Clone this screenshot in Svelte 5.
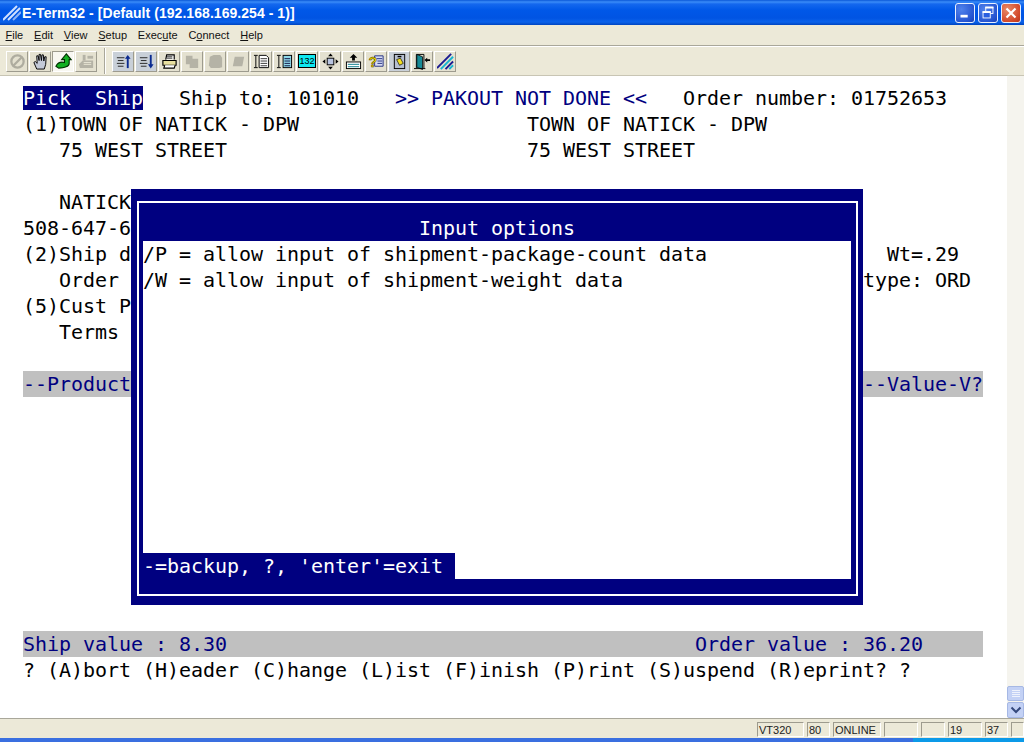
<script>
  const leftRows = [
    [{ t: 'Pick  Ship', c: 'rev' }, { t: '   Ship to: 101010   ' }, { t: '>> PAKOUT NOT DONE <<', c: 'navy' }, { t: '   Order number: 01752653' }],
    [{ t: '(1)TOWN OF NATICK - DPW                   TOWN OF NATICK - DPW' }],
    [{ t: '   75 WEST STREET                         75 WEST STREET' }],
    [{ t: ' ' }],
    [{ t: '   NATICK' }],
    [{ t: '508-647-6' }],
    [{ t: '(2)Ship d' }, { t: 'Wt=.29', gap: 63 }],
    [{ t: '   Order' }, { t: 'type: ORD', gap: 62 }],
    [{ t: '(5)Cust P' }],
    [{ t: '   Terms' }],
    [{ t: ' ' }]
  ];
  const blank = 9;
  const menus = [
    ['', 'F', 'ile'],
    ['', 'E', 'dit'],
    ['', 'V', 'iew'],
    ['', 'S', 'etup'],
    ['Exec', 'u', 'te'],
    ['C', 'o', 'nnect'],
    ['', 'H', 'elp']
  ];
  const panels = [
    { label: 'VT320', w: 47 },
    { label: '80', w: 23 },
    { label: 'ONLINE', w: 48 },
    { label: '', w: 34 },
    { label: '', w: 24 },
    { label: '19', w: 34 },
    { label: '37', w: 23 },
    { label: '', w: 13 }
  ];
</script>

<div class="window">
  <header class="titlebar">
    <svg class="logo" viewBox="0 0 18 18" width="18" height="18">
      <path d="M0 16 L14 2 M5 16 L17 4" stroke="#cfe0ff" stroke-width="2" fill="none" />
      <path d="M10 16 L18 8" stroke="#8fb4f4" stroke-width="2" fill="none" />
    </svg>
    <span class="title">E-Term32 - [Default (192.168.169.254 - 1)]</span>
    <div class="winbtns">
      <button class="wb" aria-label="Minimize">
        <svg viewBox="0 0 20 20"><rect x="5" y="12" width="8" height="3" fill="#fff" /></svg>
      </button>
      <button class="wb" aria-label="Restore">
        <svg viewBox="0 0 20 20" fill="none" stroke="#fff">
          <rect x="7.5" y="3.5" width="8" height="7" stroke-width="1" />
          <path d="M7 4 h9" stroke-width="2" />
          <rect x="4.5" y="8.5" width="8" height="7" fill="#2a5fe0" stroke-width="1" />
          <path d="M4 9 h9" stroke-width="2" />
        </svg>
      </button>
      <button class="wb close" aria-label="Close">
        <svg viewBox="0 0 20 20"><path d="M5 5 L15 15 M15 5 L5 15" stroke="#fff" stroke-width="2.4" /></svg>
      </button>
    </div>
  </header>

  <nav class="menubar">
    {#each menus as m}
      <span class="menu">{m[0]}<u>{m[1]}</u>{m[2]}</span>
    {/each}
  </nav>

  <div class="toolbar">
    <div class="group">
      <button class="tb" aria-label="Stop">
        <svg viewBox="0 0 18 18" fill="none" stroke="#aeac9f" stroke-width="2.4"><circle cx="9" cy="9" r="6.5" /><path d="M4.5 13.5 L13.5 4.5" /></svg>
      </button>
      <button class="tb" aria-label="Hold">
        <svg viewBox="0 0 18 18"><path d="M5 17 L2 10 L3.5 9 L5.5 11 L5 3 H6.5 L7.5 8 L7.5 1.5 H9 L10 8 L10.5 2 H12 L12.5 8.5 L13.5 4 H15 L14.5 12 L13 17 Z" fill="#c4cad8" stroke="#000" stroke-width="1" /></svg>
      </button>
      <button class="tb pressed" aria-label="Connect">
        <svg viewBox="0 0 18 18"><path d="M12 1 L17 7 H15 V11 C15 14 10 16 4 16 L1 14 C3 10 6 9 10 10 V7 H7 Z" fill="#12b022" stroke="#003000" stroke-width="1.2" /></svg>
      </button>
      <button class="tb" aria-label="Fax">
        <svg viewBox="0 0 18 18" fill="#b5b3a6"><path d="M1 12 L5 8 H16 V16 H2 Z" /><rect x="5" y="2" width="3" height="6" /><rect x="10" y="3" width="6" height="3" /><path d="M6 10 h8 M6 12 h8" stroke="#ece9d8" /></svg>
      </button>
    </div>
    <div class="sep"></div>
    <div class="group">
      <button class="tb tint" aria-label="Page up">
        <svg viewBox="0 0 18 18"><path d="M2 5 h8 M3 8 h6 M2 11 h8 M3 14 h6" stroke="#222" /><path d="M13.5 16 V4" stroke="#0a2a90" stroke-width="2" /><path d="M10.5 6 L13.5 2 L16.5 6 Z" fill="#0a2a90" /></svg>
      </button>
      <button class="tb tint" aria-label="Page down">
        <svg viewBox="0 0 18 18"><path d="M2 5 h8 M3 8 h6 M2 11 h8 M3 14 h6" stroke="#222" /><path d="M13.5 2 V14" stroke="#0a2a90" stroke-width="2" /><path d="M10.5 12 L13.5 16.5 L16.5 12 Z" fill="#0a2a90" /></svg>
      </button>
      <button class="tb" aria-label="Print">
        <svg viewBox="0 0 18 18" fill="#fff" stroke="#000" stroke-width="1.2"><path d="M5 7 L6 2 H14 L14 7" /><path d="M2 8 H16 V13 H2 Z" fill="#e8e0a0" /><path d="M4 13 L3 16 H14 L15 13" /><path d="M6 4 h6 M6 5.5 h6" stroke-width="0.8" /></svg>
      </button>
      <button class="tb" aria-label="Copy">
        <svg viewBox="0 0 18 18" fill="#b5b3a6"><path d="M2 3 H9 V6 H15 V16 H6 V12 H2 Z" /></svg>
      </button>
      <button class="tb" aria-label="Paste">
        <svg viewBox="0 0 18 18" fill="#b5b3a6"><path d="M3 4 L7 2 H14 L16 5 V15 L13 16 H4 L2 13 Z" /></svg>
      </button>
      <button class="tb" aria-label="Clear">
        <svg viewBox="0 0 18 18" fill="#b5b3a6"><path d="M5 4 H15 L13 14 H3 Z" /></svg>
      </button>
      <button class="tb" aria-label="Wide page">
        <svg viewBox="0 0 18 18" fill="none" stroke="#000"><path d="M1 2.5 h4 M1 15.5 h4 M3 3 V15" /><path d="M6.5 2.5 H14 L16.5 5 V15.5 H6.5 Z" fill="#fff" /><path d="M8 6 h7 M8 8.5 h7 M8 11 h7 M8 13.5 h7" stroke="#333" /></svg>
      </button>
      <button class="tb" aria-label="Narrow page">
        <svg viewBox="0 0 18 18" fill="none" stroke="#000"><path d="M1 2.5 h4 M1 15.5 h4 M3 3 V15" /><rect x="7.5" y="2.5" width="9" height="13" fill="#8fd8e8" /><path d="M9 6 h6 M9 8.5 h6 M9 11 h6 M9 13.5 h6" stroke="#114" /></svg>
      </button>
      <button class="tb" aria-label="132 columns">
        <span class="c132">132</span>
      </button>
      <button class="tb" aria-label="Move">
        <svg viewBox="0 0 18 18"><rect x="5.5" y="5.5" width="7" height="7" fill="#b8c4e0" stroke="#000" /><path d="M9 0.5 L11.5 3.5 H6.5 Z M9 17.5 L11.5 14.5 H6.5 Z M0.5 9 L3.5 6.5 V11.5 Z M17.5 9 L14.5 6.5 V11.5 Z" fill="#000" /></svg>
      </button>
      <button class="tb" aria-label="Send">
        <svg viewBox="0 0 18 18"><path d="M9 1 L13 5 H10.5 V8 H7.5 V5 H5 Z" fill="#000" /><rect x="1.5" y="9.5" width="15" height="7" fill="#fff" stroke="#000" /><path d="M3 12 h12 M3 14.5 h12" stroke="#0a7a8a" /></svg>
      </button>
      <button class="tb" aria-label="Help">
        <svg viewBox="0 0 18 18"><path d="M7 3 H16 V14 H7 Z" fill="#d8dcf4" stroke="#223080" /><path d="M9 6 h6 M10 8.5 h5 M10 11 h5" stroke="#223080" /><text class="qm" x="0.5" y="14.5">?</text></svg>
      </button>
      <button class="tb tint" aria-label="Clock">
        <svg viewBox="0 0 18 18"><rect x="3.5" y="1.5" width="11" height="15" fill="#b6bfd0" stroke="#000" /><rect x="7" y="3" width="4" height="1.5" fill="#000" /><path d="M6 7 L10 5.5 L13 11 L9 13 Z" fill="#f4e020" stroke="#000" stroke-width="0.7" /></svg>
      </button>
      <button class="tb" aria-label="Exit">
        <svg viewBox="0 0 18 18"><path d="M2.5 16 V1.5 H10.5 V16" fill="none" stroke="#000" /><path d="M3 1.5 L9 4 V17.5 L3 15 Z" fill="#178a96" stroke="#000" stroke-width="0.8" /><path d="M0 16.5 h12" stroke="#000" /><path d="M11 7.5 L14 5 V6.5 H17 V8.5 H14 V10 Z" fill="#000" /></svg>
      </button>
      <button class="tb" aria-label="About">
        <svg viewBox="0 0 18 18" fill="none" stroke-width="2"><path d="M0 16 L15 1" stroke="#1a1a90" /><path d="M4 17 L17 4" stroke="#16b4d0" /><path d="M9 17 L17 9" stroke="#1a1a90" /><path d="M13 17 L17 13" stroke="#16b4d0" /></svg>
      </button>
    </div>
  </div>

  <main class="body">
    <section class="terminal">
      {#each leftRows as row}
        <div class="row">{#each row as seg}<span class={seg.c} style:margin-left={seg.gap ? seg.gap * 12 + 'px' : null}>{seg.t}</span>{/each}</div>
      {/each}
      <div class="row bar navy"><span>--Product</span><span>--Value-V?</span></div>
      {#each Array(blank) as _}
        <div class="row"></div>
      {/each}
      <div class="row bar navy"><span>Ship value : 8.30</span><span class="ordval">Order value : 36.20</span></div>
      <div class="row">{'? (A)bort (H)eader (C)hange (L)ist (F)inish (P)rint (S)uspend (R)eprint? ?'}</div>

      <div class="dialog">
        <div class="frame">
          <div class="dlgtitle">Input options</div>
          <div class="dlgbody">
            <div class="row dark">{'/P = allow input of shipment-package-count data'}</div>
            <div class="row dark">{'/W = allow input of shipment-weight data'}</div>
            <div class="row hint">{"-=backup, ?, 'enter'=exit "}</div>
          </div>
        </div>
      </div>
    </section>
    <aside class="scrollbar">
      <div class="thumb">
        <i></i><i></i><i></i><i></i>
      </div>
      <div class="down">
        <svg viewBox="0 0 12 8" width="12" height="8"><path d="M1.5 1.5 L6 6 L10.5 1.5" fill="none" stroke="#34487c" stroke-width="2" /></svg>
      </div>
    </aside>
  </main>

  <footer class="status">
    {#each panels as p}
      <span class="panel" style="width: {p.w}px">{p.label}</span>
    {/each}
  </footer>
  <div class="taskbar"><div class="left"></div><div class="right"></div></div>
</div>

<style>
  :global(body) {
    margin: 0;
    overflow: hidden;
  }

  .window {
    width: 1024px;
    height: 742px;
    display: flex;
    flex-direction: column;
    background: #ece9d8;
    font-family: "Noto Sans", "Liberation Sans", sans-serif;
  }

  .titlebar {
    height: 25px;
    flex: none;
    display: flex;
    align-items: center;
    padding-left: 3px;
    box-sizing: border-box;
    background: linear-gradient(#0a58d8 0, #3a8cf8 2px, #1468ee 4px, #0058e8 10px, #0054e3 18px, #0a62ea 22px, #0044c0 25px);
    color: #fff;
  }

  .logo {
    margin-right: 1px;
  }

  .title {
    font-family: "Liberation Sans", sans-serif;
    font-weight: 700;
    font-size: 14px;
    letter-spacing: 0.05px;
    white-space: nowrap;
  }

  .winbtns {
    margin-left: auto;
    display: flex;
    gap: 3px;
    padding-right: 3px;
  }

  .wb {
    width: 20px;
    height: 20px;
    padding: 0;
    box-sizing: border-box;
    border: 1px solid #e8f0ff;
    border-radius: 3px;
    background: radial-gradient(circle at 30% 30%, #4f82ec, #2452cf 75%, #1a3fb0);
    display: block;
  }

  .wb svg {
    display: block;
    width: 18px;
    height: 18px;
  }

  .wb.close {
    background: radial-gradient(circle at 30% 30%, #e88a68, #d2492a 70%, #b8341c);
  }

  .menubar {
    height: 20px;
    flex: none;
    display: flex;
    align-items: center;
    padding-left: 5.5px;
    gap: 10.8px;
    font-family: "Liberation Sans", sans-serif;
    font-size: 11px;
    color: #111;
    border-bottom: 1px solid #a9a79a;
    box-shadow: 0 1px 0 #fff;
  }

  .menu {
    white-space: nowrap;
  }

  .toolbar {
    height: 29px;
    flex: none;
    box-sizing: border-box;
    display: flex;
    align-items: center;
    padding: 0 0 0 6px;
    margin-top: 1px;
    border-bottom: 1px solid #c8c5b4;
  }

  .group {
    display: flex;
    gap: 1px;
  }

  .sep {
    width: 1px;
    height: 26px;
    margin: 0 7px 0 7px;
    background: #a9a79a;
    box-shadow: 1px 0 0 #fff;
  }

  .tb {
    width: 22px;
    height: 21px;
    padding: 0;
    box-sizing: border-box;
    background: #e4e1d0;
    border: 1px solid;
    border-color: #fff #9d9b8e #9d9b8e #fff;
    display: flex;
    align-items: center;
    justify-content: center;
  }

  .tb svg {
    width: 17px;
    height: 17px;
    display: block;
  }

  .tb.pressed {
    background: #f8f7f1;
    border-color: #9d9b8e #fff #fff #9d9b8e;
  }

  .tb.tint {
    background: #c9d0d8;
  }

  .c132 {
    display: block;
    width: 18px;
    height: 14px;
    line-height: 13px;
    background: #10e8f0;
    border: 1px solid #000;
    box-sizing: border-box;
    font-family: "Liberation Sans", sans-serif;
    font-size: 9px;
    color: #000;
    text-align: center;
  }

  .qm {
    font-family: "Liberation Sans", sans-serif;
    font-weight: 700;
    font-size: 15px;
    fill: #f4e000;
    stroke: #403000;
    stroke-width: 0.5px;
  }

  .body {
    flex: 1;
    display: flex;
    min-height: 0;
    background: #fff;
  }

  .terminal {
    position: relative;
    flex: 1;
    box-sizing: border-box;
    padding: 9px 0 0 23px;
    font-family: "DejaVu Sans Mono", monospace;
    font-size: 20px;
    letter-spacing: -0.04px;
    color: #000;
  }

  .row {
    height: 26px;
    line-height: 26px;
    white-space: pre;
  }

  .rev {
    background: #000080;
    color: #fff;
  }

  .navy {
    color: #000080;
  }

  .bar {
    width: 960px;
    background: #c0c0c0;
    display: flex;
    justify-content: space-between;
  }

  .ordval {
    margin-right: 60px;
  }

  .dialog {
    position: absolute;
    left: 131px;
    top: 113px;
    width: 732px;
    height: 416px;
    box-sizing: border-box;
    padding: 12px 5px 9px 6px;
    background: #000080;
    color: #fff;
  }

  .frame {
    height: 100%;
    box-sizing: border-box;
    border: 2px solid #fff;
    padding: 0 5px 15px 4px;
    display: flex;
    flex-direction: column;
  }

  .dlgtitle {
    height: 38px;
    flex: none;
    line-height: 50px;
    text-align: center;
    box-sizing: border-box;
    white-space: pre;
  }

  .dlgbody {
    flex: 1;
    background: #fff;
    display: flex;
    flex-direction: column;
  }

  .dark {
    color: #000;
  }

  .hint {
    margin-top: auto;
    align-self: flex-start;
    background: #000080;
    color: #fff;
  }

  .scrollbar {
    width: 17px;
    flex: none;
    background: #f5f4ee;
    display: flex;
    flex-direction: column;
    justify-content: flex-end;
    gap: 1px;
  }

  .thumb {
    height: 15px;
    box-sizing: border-box;
    background: #c3d1f5;
    border: 1px solid #a6b8e4;
    border-radius: 2px;
    display: flex;
    flex-direction: column;
    align-items: center;
    justify-content: center;
    gap: 1px;
  }

  .thumb i {
    display: block;
    width: 8px;
    height: 1px;
    background: #eef2fc;
  }

  .down {
    height: 16px;
    box-sizing: border-box;
    background: #c3d1f5;
    border: 1px solid #a6b8e4;
    border-radius: 2px;
    display: flex;
    align-items: center;
    justify-content: center;
  }

  .status {
    height: 20px;
    flex: none;
    box-sizing: border-box;
    display: flex;
    justify-content: flex-end;
    gap: 3px;
    padding-top: 3px;
    border-top: 1px solid #a9a79a;
    font-family: "Liberation Sans", sans-serif;
    font-size: 11px;
    color: #222;
  }

  .panel {
    height: 15px;
    line-height: 15px;
    box-sizing: border-box;
    padding-left: 1px;
    border: 1px solid;
    border-color: #9d9b8e #fff #fff #9d9b8e;
    white-space: nowrap;
    overflow: hidden;
  }

  .taskbar {
    height: 4px;
    flex: none;
    display: flex;
  }

  .left {
    width: 913px;
    background: #3a6fe0;
  }

  .right {
    flex: 1;
    background: #0c9ae8;
  }
</style>
